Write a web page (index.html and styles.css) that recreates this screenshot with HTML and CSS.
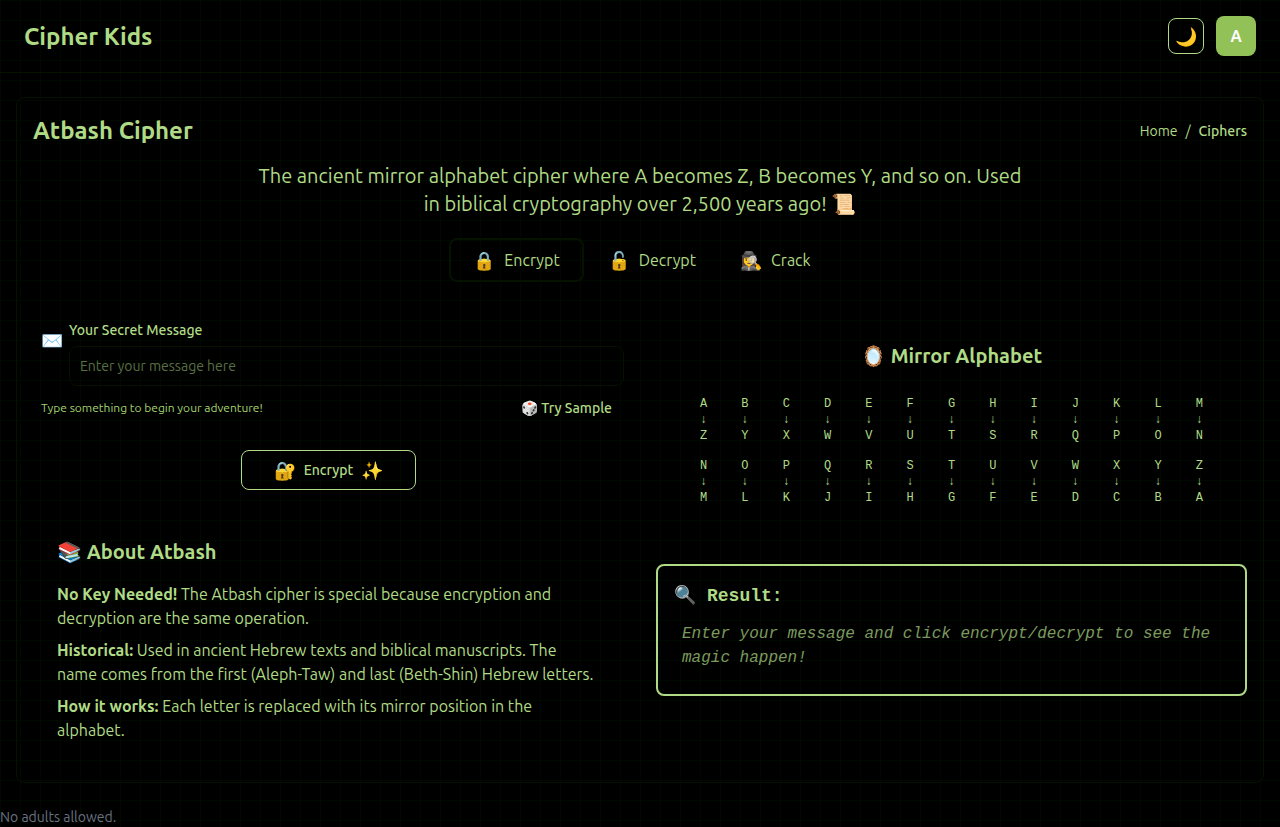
FILE: index.html
```
<!DOCTYPE html>
<html lang="en">
<head>
<meta charset="utf-8">
<meta name="viewport" content="width=device-width, initial-scale=1">
<title>Cipher Kids</title>
<link rel="stylesheet" href="styles.css">
</head>
<body>
<header class="topbar">
  <a class="brand" href="#">Cipher Kids</a>
  <div class="topbar-actions">
    <button class="theme-button" type="button" aria-label="Toggle theme">🌙</button>
    <button class="avatar" type="button">A</button>
  </div>
</header>
<main class="card">
  <div class="card-head">
    <h1 class="title">Atbash Cipher</h1>
    <nav class="crumbs" aria-label="Breadcrumb"><a href="#">Home</a><span>/</span><a class="current" href="#">Ciphers</a></nav>
  </div>
  <p class="intro">The ancient mirror alphabet cipher where A becomes Z, B becomes Y, and so on. Used in biblical cryptography over 2,500 years ago! 📜</p>
  <div class="tabs">
    <button class="tab active" type="button"><span class="emoji lead">🔒</span><span>Encrypt</span></button>
    <button class="tab" type="button"><span class="emoji lead">🔓</span><span>Decrypt</span></button>
    <button class="tab" type="button"><span class="emoji lead">🕵️‍♀️</span><span>Crack</span></button>
  </div>
  <div class="columns">
    <section class="left">
      <div class="field">
        <span class="field-icon emoji">✉️</span>
        <div class="field-body">
          <label for="message">Your Secret Message</label>
          <input id="message" type="text" placeholder="Enter your message here">
        </div>
      </div>
      <div class="hint-row">
        <p class="hint">Type something to begin your adventure!</p>
        <button class="sample" type="button">🎲 Try Sample</button>
      </div>
      <button class="submit" type="button"><span class="emoji">🔐</span><span>Encrypt</span><span class="emoji">✨</span></button>
      <article class="about">
        <h2>📚 About Atbash</h2>
        <p><strong>No Key Needed!</strong> The Atbash cipher is special because encryption and decryption are the same operation.</p>
        <p><strong>Historical:</strong> Used in ancient Hebrew texts and biblical manuscripts. The name comes from the first (Aleph-Taw) and last (Beth-Shin) Hebrew letters.</p>
        <p><strong>How it works:</strong> Each letter is replaced with its mirror position in the alphabet.</p>
      </article>
    </section>
    <section class="right">
      <h2 class="mirror-title">🪞 Mirror Alphabet</h2>
      <div class="alphabet">
        <div class="pair"><span>A</span><span>↓</span><span>Z</span></div>
        <div class="pair"><span>B</span><span>↓</span><span>Y</span></div>
        <div class="pair"><span>C</span><span>↓</span><span>X</span></div>
        <div class="pair"><span>D</span><span>↓</span><span>W</span></div>
        <div class="pair"><span>E</span><span>↓</span><span>V</span></div>
        <div class="pair"><span>F</span><span>↓</span><span>U</span></div>
        <div class="pair"><span>G</span><span>↓</span><span>T</span></div>
        <div class="pair"><span>H</span><span>↓</span><span>S</span></div>
        <div class="pair"><span>I</span><span>↓</span><span>R</span></div>
        <div class="pair"><span>J</span><span>↓</span><span>Q</span></div>
        <div class="pair"><span>K</span><span>↓</span><span>P</span></div>
        <div class="pair"><span>L</span><span>↓</span><span>O</span></div>
        <div class="pair"><span>M</span><span>↓</span><span>N</span></div>
        <div class="pair"><span>N</span><span>↓</span><span>M</span></div>
        <div class="pair"><span>O</span><span>↓</span><span>L</span></div>
        <div class="pair"><span>P</span><span>↓</span><span>K</span></div>
        <div class="pair"><span>Q</span><span>↓</span><span>J</span></div>
        <div class="pair"><span>R</span><span>↓</span><span>I</span></div>
        <div class="pair"><span>S</span><span>↓</span><span>H</span></div>
        <div class="pair"><span>T</span><span>↓</span><span>G</span></div>
        <div class="pair"><span>U</span><span>↓</span><span>F</span></div>
        <div class="pair"><span>V</span><span>↓</span><span>E</span></div>
        <div class="pair"><span>W</span><span>↓</span><span>D</span></div>
        <div class="pair"><span>X</span><span>↓</span><span>C</span></div>
        <div class="pair"><span>Y</span><span>↓</span><span>B</span></div>
        <div class="pair"><span>Z</span><span>↓</span><span>A</span></div>
      </div>
      <div class="result">
        <h3><span class="emoji lead">🔍</span><span>Result:</span></h3>
        <p>Enter your message and click encrypt/decrypt to see the magic happen!</p>
      </div>
    </section>
  </div>
</main>
<footer class="footer">No adults allowed.</footer>
</body>
</html>
```
FILE: styles.css
```
* { box-sizing: border-box; }
body {
  margin: 0;
  background-color: #000;
  background-image:
    linear-gradient(#000900 1px, transparent 1px),
    linear-gradient(90deg, #000900 1px, transparent 1px);
  background-size: 20px 20px;
  color: #b0db86;
  font-family: Ubuntu, "Noto Sans", sans-serif;
  font-size: 16px;
  font-weight: 400;
  line-height: 24px;
}
h1, h2, h3, p { margin: 0; }
a { color: inherit; text-decoration: none; }
button, input { font: inherit; color: inherit; background: transparent; border: 0; padding: 0; }
button { cursor: pointer; }
strong { font-weight: 600; }
.emoji { font-size: 18px; font-weight: 400; }
.lead { min-width: 23px; text-align: left; }

.topbar {
  display: flex;
  align-items: center;
  justify-content: space-between;
  padding: 16px 24px;
  border-bottom: 1px solid #061200;
}
.brand { font-size: 24px; line-height: 33px; font-weight: 600; }
.topbar-actions { display: flex; align-items: center; gap: 12px; }
.theme-button {
  width: 36px;
  height: 36px;
  border: 1px solid #b0db86;
  border-radius: 8px;
  font-size: 18px;
}
.avatar {
  width: 40px;
  height: 40px;
  border-radius: 8px;
  background: #91c157;
  color: #fff;
  font-weight: 600;
}

.card {
  margin: 24px 16px 0;
  padding: 16px 16px 24px;
  border: 1px solid #061200;
  border-radius: 8px;
}
.card-head { display: flex; align-items: center; justify-content: space-between; }
.title { font-size: 24px; line-height: 33px; font-weight: 600; }
.crumbs { display: flex; gap: 8px; font-size: 14px; line-height: 20px; }
.crumbs .current { font-weight: 500; }
.intro {
  max-width: 768px;
  margin: 15px auto 20px;
  font-size: 20px;
  line-height: 28px;
  text-align: center;
}
.tabs { display: flex; justify-content: center; gap: 4px; }
.tab {
  display: flex;
  align-items: center;
  gap: 8px;
  min-height: 44px;
  padding: 0 20px;
  border-radius: 8px;
}
.tab.active { padding: 0 22px; border: 2px solid #061200; }

.columns {
  display: grid;
  grid-template-columns: 1fr 1fr;
  gap: 32px;
  margin-top: 38px;
}
.left { display: flex; flex-direction: column; }
.field { display: flex; align-items: flex-start; gap: 8px; padding-left: 8px; }
.field-icon { width: 20px; padding-top: 8px; }
.field-body { flex: 1; display: flex; flex-direction: column; gap: 6px; }
.field-body label { font-size: 14px; line-height: 20px; font-weight: 500; }
.field-body input {
  width: 100%;
  height: 40px;
  padding: 0 10px;
  border: 1px solid #061200;
  border-radius: 8px;
  font-size: 14px;
}
.field-body input::placeholder { color: #b0db86; opacity: 0.5; }
.hint-row {
  display: flex;
  align-items: center;
  justify-content: space-between;
  margin-top: 6px;
  padding: 0 12px 0 8px;
}
.hint { font-size: 12px; line-height: 16px; color: #a3d46f; }
.sample { height: 32px; font-size: 14px; font-weight: 500; }
.submit {
  display: flex;
  align-items: center;
  align-self: center;
  gap: 8px;
  height: 40px;
  margin-top: 26px;
  padding: 0 32px;
  border: 1px solid #b0db86;
  border-radius: 8px;
  font-size: 14px;
  font-weight: 500;
}
.about { display: flex; flex-direction: column; gap: 8px; margin-top: 32px; padding: 16px 24px; }
.about h2 { margin-bottom: 8px; font-size: 20px; line-height: 28px; font-weight: 600; }

.right { padding-top: 22px; }
.mirror-title { font-size: 20px; line-height: 28px; font-weight: 600; text-align: center; }
.alphabet {
  display: grid;
  grid-template-columns: repeat(13, 1fr);
  gap: 14px 10px;
  margin-top: 26px;
  padding: 0 32px;
  font-family: "Liberation Mono", monospace;
  font-size: 12px;
  line-height: 16px;
}
.pair { display: flex; flex-direction: column; align-items: center; }
.result {
  margin-top: 58px;
  padding: 16px 16px 20px;
  border: 2px solid #b0db86;
  border-radius: 8px;
  font-family: "Liberation Mono", monospace;
}
.result h3 { display: flex; align-items: center; gap: 10px; font-size: 18px; line-height: 28px; font-weight: 700; }
.result p { margin-top: 8px; padding: 4px 8px; font-style: italic; opacity: 0.7; }

.footer { margin-top: 24px; font-size: 14px; line-height: 20px; color: #6b7280; }
```
